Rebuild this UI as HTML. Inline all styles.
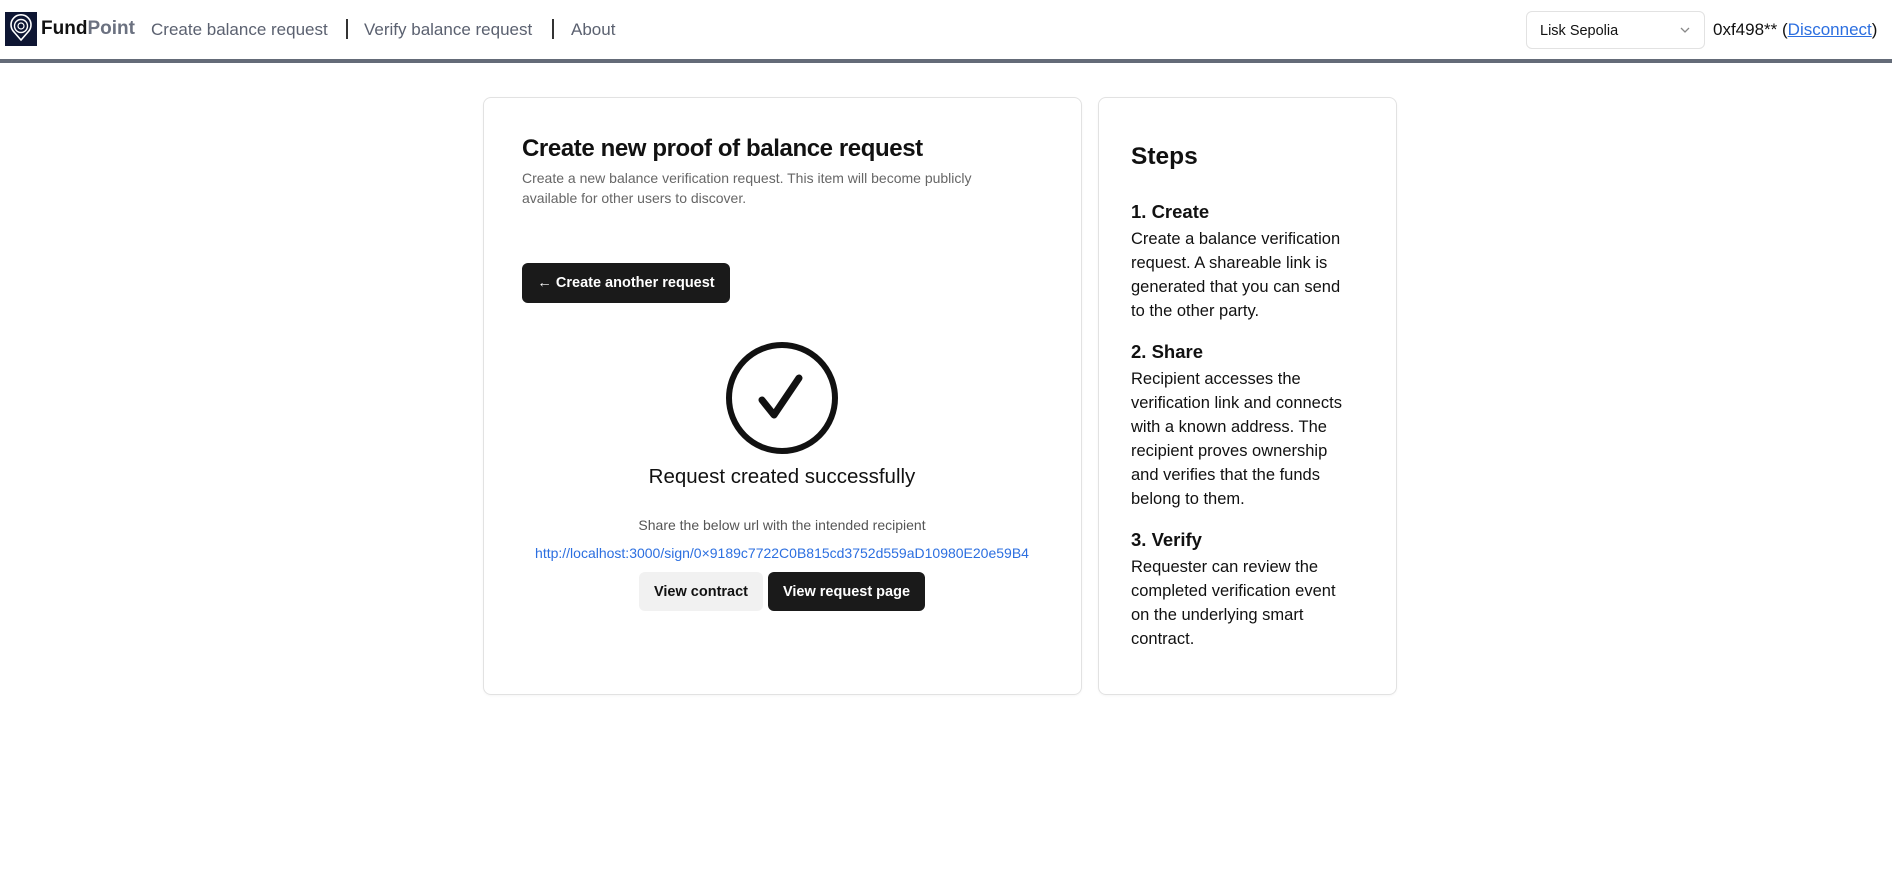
<!DOCTYPE html>
<html><head><meta charset="utf-8"><style>
*{box-sizing:border-box;margin:0;padding:0}
body{width:1892px;height:883px;background:#fff;font-family:"Liberation Sans",sans-serif;color:#111;position:relative;overflow:hidden}
.a{position:absolute;white-space:nowrap}
.hdr{position:absolute;left:0;top:0;width:1892px;height:63px;border-bottom:4px solid #646b78}
.nav{font-size:17px;color:#5b6170;top:20px}
.sep{position:absolute;top:19px;width:1.5px;height:20px;background:#333}
.card{position:absolute;top:97px;height:598px;border:1px solid #e2e2e2;border-radius:8px;box-shadow:0 1px 2px rgba(0,0,0,.04)}
.btn{position:absolute;border-radius:6px;font-size:14.5px;font-weight:bold;display:flex;align-items:center;justify-content:center}
.dark{background:#1a1a1a;color:#fff}
.st{font-size:16.5px;line-height:24px;color:#111}
.sh{font-size:18.5px;font-weight:bold}
</style></head><body>
<div class="hdr"></div>
<svg class="a" style="left:5px;top:12px" width="32" height="34" viewBox="0 0 32 34"><rect width="32" height="34" fill="#0e1633"/><path d="M16 28 L9 20 A10 10 0 1 1 23 20 Z" fill="none" stroke="#fff" stroke-width="1.6"/><circle cx="16" cy="14" r="6.5" fill="none" stroke="#fff" stroke-width="1.4"/><circle cx="16" cy="14" r="3" fill="none" stroke="#fff" stroke-width="1.2"/></svg>
<div class="a" style="left:41px;top:18px;font-size:19px;font-weight:bold"><span style="color:#111">Fund</span><span style="color:#6b7180">Point</span></div>
<div class="a nav" style="left:151px">Create balance request</div>
<div class="sep" style="left:346px"></div>
<div class="a nav" style="left:364px">Verify balance request</div>
<div class="sep" style="left:552px"></div>
<div class="a nav" style="left:571px">About</div>
<div class="a" style="left:1526px;top:11px;width:179px;height:38px;border:1px solid #e2e2e2;border-radius:6px;font-size:14.5px;padding:11px 0 0 13px">Lisk Sepolia<svg style="position:absolute;right:14px;top:15px" width="10" height="7" viewBox="0 0 10 7"><path d="M1 1l4 4 4-4" fill="none" stroke="#888" stroke-width="1.3"/></svg></div>
<div class="a" style="left:1713px;top:20px;font-size:17px;color:#111">0xf498** (<span style="color:#2c6fe0;text-decoration:underline">Disconnect</span>)</div>

<div class="card" style="left:483px;width:599px"></div>
<div class="a" style="left:522px;top:135px;font-size:24px;font-weight:bold;letter-spacing:-0.4px">Create new proof of balance request</div>
<div class="a" style="left:522px;top:168px;font-size:14px;line-height:20px;color:#666;white-space:normal;width:490px">Create a new balance verification request. This item will become publicly available for other users to discover.</div>
<div class="btn dark" style="left:522px;top:263px;width:208px;height:40px">← Create another request</div>
<svg class="a" style="left:724px;top:340px" width="116" height="116" viewBox="0 0 116 116"><circle cx="58" cy="58" r="53" fill="none" stroke="#111" stroke-width="6"/><path d="M38 60 L50 75 L75 38" fill="none" stroke="#111" stroke-width="7" stroke-linecap="round" stroke-linejoin="round"/></svg>
<div class="a" style="left:582px;width:400px;text-align:center;top:465px;font-size:20.5px">Request created successfully</div>
<div class="a" style="left:582px;width:400px;text-align:center;top:517px;font-size:14px;color:#555">Share the below url with the intended recipient</div>
<div class="a" style="left:482px;width:600px;text-align:center;top:545px;font-size:14px;color:#2c6fe0">http://localhost:3000/sign/0×9189c7722C0B815cd3752d559aD10980E20e59B4</div>
<div class="btn" style="left:639px;top:572px;width:124px;height:39px;background:#f1f1f1;color:#111">View contract</div>
<div class="btn dark" style="left:768px;top:572px;width:157px;height:39px">View request page</div>

<div class="card" style="left:1098px;width:299px"></div>
<div class="a" style="left:1131px;top:143px;font-size:24.5px;font-weight:bold">Steps</div>
<div class="a sh" style="left:1131px;top:201px">1. Create</div>
<div class="a st" style="left:1131px;top:227px">Create a balance verification<br>request. A shareable link is<br>generated that you can send<br>to the other party.</div>
<div class="a sh" style="left:1131px;top:341px">2. Share</div>
<div class="a st" style="left:1131px;top:367px">Recipient accesses the<br>verification link and connects<br>with a known address. The<br>recipient proves ownership<br>and verifies that the funds<br>belong to them.</div>
<div class="a sh" style="left:1131px;top:529px">3. Verify</div>
<div class="a st" style="left:1131px;top:555px">Requester can review the<br>completed verification event<br>on the underlying smart<br>contract.</div>
</body></html>
